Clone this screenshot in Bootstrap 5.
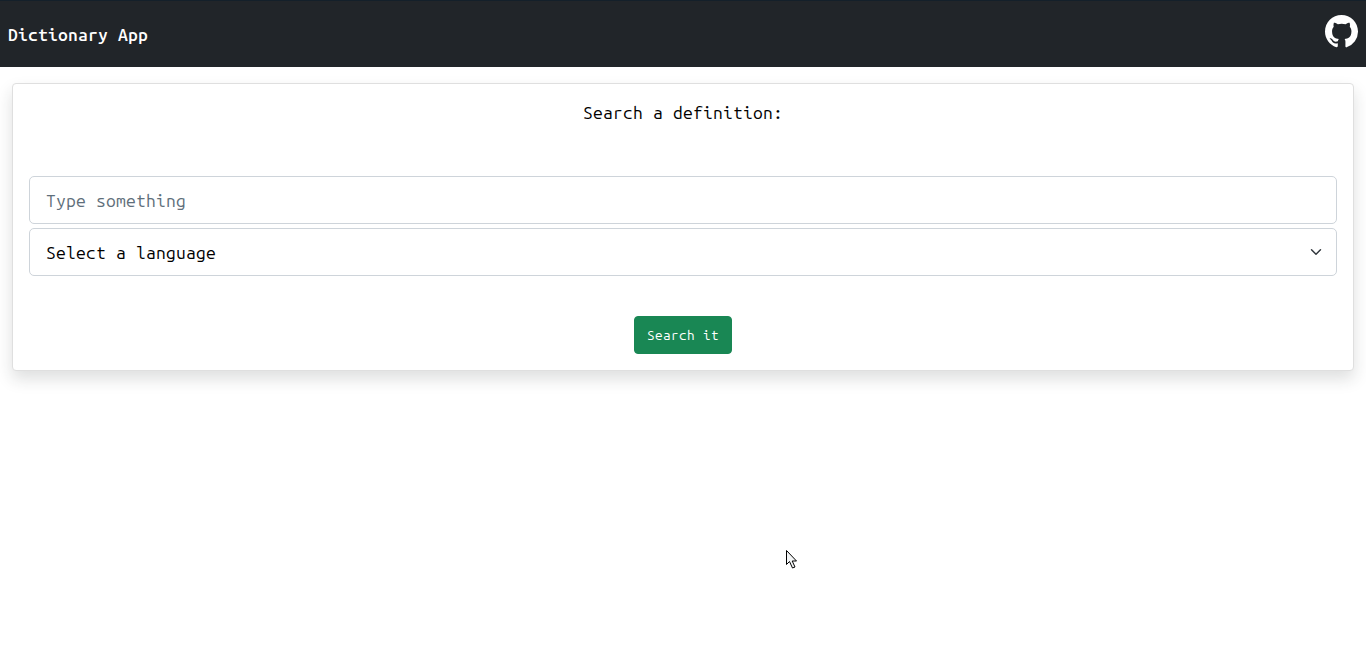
<!DOCTYPE html>
<html lang="en">
<head>
<meta charset="utf-8">
<meta name="viewport" content="width=device-width, initial-scale=1">
<title>Dictionary App</title>
<link href="https://cdn.jsdelivr.net/npm/bootstrap@5.3.0/dist/css/bootstrap.min.css" rel="stylesheet">
<style>
  body { font-family: "Ubuntu Mono", "DejaVu Sans Mono", monospace; color: #000; }
  .topbar { height: 67px; background: #212529; border-top: 1px solid #14202a; }
  .topbar .navbar-brand, .prompt, .search-form .form-control, .search-form .form-select { font-size: 17.5px; letter-spacing: .2px; }
  .topbar .navbar-brand { line-height: 30px; padding: 2px 0 0; font-weight: 500; }
  .topbar a svg { display: block; margin-bottom: 6px; }
  .search-card { border-color: #dfdfdf; border-radius: 4px; min-height: 288px; }
  .prompt { line-height: 30px; margin: -2px 0 48px; }
  .search-form .form-control, .search-form .form-select { height: 48px; border-color: #ced4da; border-radius: 5px; color: #000; line-height: 30px; padding-top: 8px; padding-bottom: 8px; }
  .search-form .form-select { padding-top: 9px; padding-bottom: 7px; }
  .search-form .form-control::placeholder { color: #5f6f7b; opacity: 1; }
  .search-form .btn { font-size: 13.6px; letter-spacing: .38px; line-height: 24px; height: 38px; border-radius: 4px; margin-top: 40px; }
  .pointer { left: 785px; top: 549px; }
</style>
</head>
<body class="min-vh-100">
<nav class="navbar topbar p-0">
  <div class="container-fluid px-2">
    <a class="navbar-brand text-white" href="#">Dictionary App</a>
    <a class="text-white" href="#" aria-label="GitHub">
      <svg width="33" height="33" viewBox="0 0 16 16" fill="currentColor"><path d="M8 0C3.58 0 0 3.58 0 8c0 3.54 2.29 6.53 5.47 7.59.4.07.75-.17.75-.38 0-.19-.01-.82-.01-1.49-2.01.37-2.63-.49-2.79-.94-.09-.23-.48-.84-.82-1.03-.28-.15-.58-.42-.01-.43.63-.01 1.08.58 1.23.82.72 1.11 1.77.77 2.43.56.07-.52.28-.87.51-1.07-1.78-.2-3.34-.89-3.34-3.75 0-.87.31-1.59.82-2.15-.08-.2-.26-1.02.08-1.92 0 0 .67-.21 1.9.72.64-.18 1.22-.27 1.9-.27s1.26.09 1.9.27c1.23-.94 1.9-.72 1.9-.72.34.9.16 1.72.08 1.92.51.56.82 1.27.82 2.15 0 2.87-1.57 3.55-3.35 3.75.29.25.44.73.44 1.48 0 1.07-.01 1.93-.01 2.2 0 .21.25.46.55.38A8.01 8.01 0 0 0 16 8c0-4.42-3.58-8-8-8"/></svg>
    </a>
  </div>
</nav>
<main class="container-fluid pt-3">
  <div class="card search-card shadow">
    <form class="card-body search-form text-center">
      <p class="prompt">Search a definition:</p>
      <input class="form-control form-control-lg mb-1" type="text" placeholder="Type something">
      <select class="form-select form-select-lg" aria-label="Language"><option>Select a language</option></select>
      <button class="btn btn-success" type="button">Search it</button>
    </form>
  </div>
</main>
<svg class="pointer position-absolute" width="14" height="22" viewBox="0 0 14 22" aria-hidden="true"><path d="M1.5 1.5v14l3-3 3 6.5 2.5-1-2.8-6h4.3z" fill="#f3f5f6" stroke="#000"/></svg>
</body>
</html>
